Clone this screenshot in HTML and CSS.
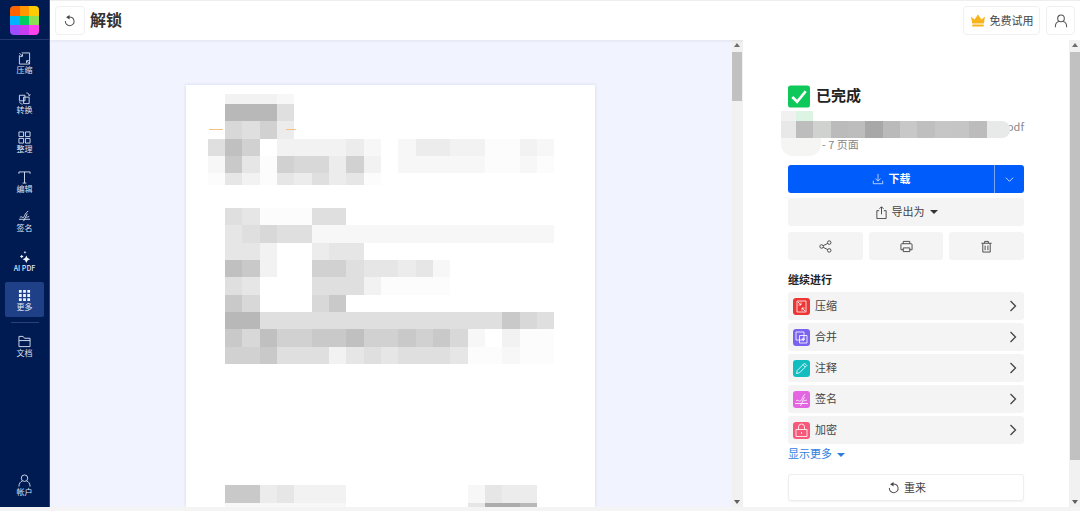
FILE: index.html
```html
<!DOCTYPE html>
<html lang="zh-CN">
<head>
<meta charset="utf-8">
<title>解锁</title>
<link rel="stylesheet" href="styles.css">
</head>
<body>
<div class="app">
  <aside class="side">
    <div class="logo-wrap">
      <div class="logo">
        <i class="l1"></i><i class="l2"></i><i class="l3"></i>
        <i class="l4"></i><i class="l5"></i><i class="l6"></i>
        <i class="l7"></i><i class="l8"></i><i class="l9"></i>
      </div>
    </div>
    <nav class="nav">
      <a class="nav-item">
        <svg class="nav-ic" viewBox="0 0 14 14"><path d="M4 1h8.500v12H1.500V3.500M1.500 1.200l3 3M4.800 2.200v2.500H2.300M12.500 12.800l-3-3M9.200 11.800V9.300h2.500"/></svg>
        <span>压缩</span>
      </a>
      <a class="nav-item">
        <svg class="nav-ic" viewBox="0 0 14 14"><path d="M1.500 3.500h6v6h-6zM6 5.500h6v7H6zM9 1c1.800 0 3 1 3.300 2.800M11 3l1.300 1 1-1.300M5 13c-1.800 0-3-.8-3.300-2.500"/></svg>
        <span>转换</span>
      </a>
      <a class="nav-item">
        <svg class="nav-ic" viewBox="0 0 14 14"><path d="M1 1h5v5H1zM8 1h5v5H8zM1 8h5v5H1zM8 8h5v5H8z"/></svg>
        <span>整理</span>
      </a>
      <a class="nav-item">
        <svg class="nav-ic" viewBox="0 0 14 14"><path d="M1 3V1h12v2M7 1v12M5 13h4"/></svg>
        <span>编辑</span>
      </a>
      <a class="nav-item">
        <svg class="nav-ic" viewBox="0 0 14 14"><path d="M1 10h12M2 8c2-2 3 1 4 0s1-3 3-5l2-2M6 12l4-8M9 8c1 0 2-1 3-1"/></svg>
        <span>签名</span>
      </a>
      <a class="nav-item">
        <svg class="nav-ic solid" viewBox="0 0 14 14"><path d="M9 6l1.300 2.700L13 10l-2.700 1.300L9 14l-1.300-2.700L5 10l2.700-1.300zM4 5l.7 1.300L6 7l-1.300.7L4 9l-.7-1.300L2 7l1.300-.7zM7.500 1l.5 1 1 .5-1 .5-.5 1-.5-1-1-.5 1-.5z"/></svg>
        <span class="latin">AI PDF</span>
      </a>
      <a class="nav-item active">
        <svg class="nav-ic solid" viewBox="0 0 14 14"><path d="M1 1h3v3H1zM5.500 1h3v3h-3zM10 1h3v3h-3zM1 5.500h3v3H1zM5.500 5.500h3v3h-3zM10 5.500h3v3h-3zM1 10h3v3H1zM5.500 10h3v3h-3zM10 10h3v3h-3z"/></svg>
        <span>更多</span>
      </a>
    </nav>
    <div class="side-rule"></div>
    <a class="nav-item">
      <svg class="nav-ic" viewBox="0 0 14 14"><path d="M1 12.500V1.500h4.500l1.500 2h6v9zM1 6h12"/></svg>
      <span>文档</span>
    </a>
    <a class="nav-item account">
      <svg class="nav-ic" viewBox="0 0 14 14"><circle cx="7" cy="4.500" r="3.500"/><path d="M1 13.500c0-3.500 2-5.500 3.500-5.800M13 13.500c0-3.500-2-5.500-3.500-5.800"/></svg>
      <span>帐户</span>
    </a>
  </aside>

  <div class="content">
    <header class="top">
      <button class="tbtn undo">
        <svg class="ic16" viewBox="0 0 16 16"><path class="line" d="M6 3.700a5 5 0 1 1-3.300 4.300"/><path class="fill" d="M7.500 1v5.200L3.500 3.600z"/></svg>
      </button>
      <h1 class="title">解锁</h1>
      <button class="tbtn trial">
        <svg class="crown" viewBox="0 0 16 13"><path d="M1 2.500l3.500 3L8 .5l3.500 5 3.500-3-1.200 7H2.200zM2.300 10.500h11.400V12.500H2.300z"/></svg>
        <span>免费试用</span>
      </button>
      <button class="tbtn user">
        <svg class="ic16" viewBox="0 0 16 16"><circle class="line" cx="8" cy="5" r="3.800"/><path class="line" d="M1.500 15c0-3.800 2.200-6 4-6.400M14.500 15c0-3.800-2.200-6-4-6.400"/></svg>
      </button>
    </header>

    <div class="work">
      <section class="doc-area">
        <div class="page">
          <div class="mosaic">
            <div class="mr short"><i></i><i class="j"></i><i class="j"></i><i class="j"></i><i class="k"></i></div>
            <div class="mr"><i></i><i class="b"></i><i class="b"></i><i class="b"></i><i class="g"></i></div>
            <div class="mr"><i></i><i class="f"></i><i class="g"></i><i class="e"></i><i class="i"></i></div>
            <div class="mr"><i class="g"></i><i class="c"></i><i class="e"></i><i></i><i class="j"></i><i class="j"></i><i class="j"></i><i class="j"></i><i class="i"></i><i class="k"></i><i></i><i class="k"></i><i class="i"></i><i class="i"></i><i class="j"></i><i class="j"></i><i class="l"></i><i class="l"></i><i class="j"></i><i class="k"></i></div>
            <div class="mr"><i class="k"></i><i class="d"></i><i class="h"></i><i class="l"></i><i class="e"></i><i class="f"></i><i class="f"></i><i class="i"></i><i class="e"></i><i class="j"></i><i></i><i class="k"></i><i class="k"></i><i class="k"></i><i class="k"></i><i class="k"></i><i class="l"></i><i class="l"></i><i class="k"></i><i class="l"></i></div>
            <div class="mr low"><i class="l"></i><i class="h"></i><i class="j"></i><i class="l"></i><i class="h"></i><i class="i"></i><i class="g"></i><i class="i"></i><i class="h"></i><i class="l"></i></div>
            <div class="gap-a"></div>
            <div class="mr"><i></i><i class="g"></i><i class="h"></i><i class="l"></i><i class="l"></i><i class="l"></i><i class="g"></i><i class="g"></i></div>
            <div class="mr"><i></i><i class="h"></i><i class="g"></i><i class="f"></i><i class="g"></i><i class="g"></i><i class="k"></i><i class="k"></i><i class="k"></i><i class="k"></i><i class="k"></i><i class="k"></i><i class="k"></i><i class="k"></i><i class="k"></i><i class="k"></i><i class="k"></i><i class="k"></i><i class="k"></i><i class="k"></i></div>
            <div class="mr"><i></i><i class="h"></i><i class="h"></i><i class="j"></i><i></i><i></i><i class="i"></i><i class="h"></i><i class="h"></i></div>
            <div class="mr"><i></i><i class="c"></i><i class="d"></i><i class="j"></i><i></i><i></i><i class="e"></i><i class="e"></i><i class="g"></i><i class="h"></i><i class="h"></i><i class="i"></i><i class="h"></i><i class="k"></i></div>
            <div class="mr"><i></i><i class="g"></i><i class="h"></i><i></i><i></i><i></i><i class="g"></i><i class="g"></i><i class="g"></i><i class="j"></i><i class="l"></i><i class="l"></i><i class="l"></i><i class="l"></i></div>
            <div class="mr"><i></i><i class="d"></i><i class="f"></i><i></i><i></i><i></i><i class="f"></i><i class="d"></i></div>
            <div class="mr"><i></i><i class="b"></i><i class="b"></i><i class="g"></i><i class="g"></i><i class="g"></i><i class="g"></i><i class="g"></i><i class="g"></i><i class="g"></i><i class="g"></i><i class="g"></i><i class="g"></i><i class="g"></i><i class="g"></i><i class="g"></i><i class="g"></i><i class="d"></i><i class="f"></i><i class="g"></i></div>
            <div class="mr"><i></i><i class="d"></i><i class="f"></i><i class="c"></i><i class="e"></i><i class="e"></i><i class="d"></i><i class="d"></i><i class="c"></i><i class="e"></i><i class="e"></i><i class="d"></i><i class="e"></i><i class="d"></i><i class="f"></i><i class="k"></i><i></i><i class="j"></i><i class="l"></i><i class="l"></i></div>
            <div class="mr"><i></i><i class="e"></i><i class="e"></i><i class="d"></i><i class="g"></i><i class="g"></i><i class="g"></i><i class="j"></i><i class="h"></i><i class="g"></i><i class="h"></i><i class="g"></i><i class="g"></i><i class="g"></i><i class="h"></i><i class="l"></i><i class="l"></i><i class="k"></i><i class="l"></i><i class="l"></i></div>
            <div class="gap-b"></div>
            <div class="mr"><i></i><i class="d"></i><i class="d"></i><i class="i"></i><i class="h"></i><i class="j"></i><i class="j"></i><i class="j"></i><i></i><i></i><i></i><i></i><i></i><i></i><i></i><i class="k"></i><i class="h"></i><i class="i"></i><i class="i"></i></div>
            <div class="mr"><i></i><i class="k"></i><i class="k"></i><i class="k"></i><i class="k"></i><i class="k"></i><i class="k"></i><i class="k"></i><i></i><i></i><i></i><i></i><i></i><i></i><i></i><i class="h"></i><i class="a"></i><i class="a"></i><i class="b"></i></div>
          </div>
          <span class="dash dash-l"></span>
          <span class="dash dash-r"></span>
        </div>
      </section>

      <div class="sbar sbar-doc">
        <span class="arrow up"></span>
        <span class="thumb thumb-doc"></span>
        <span class="arrow down"></span>
      </div>

      <section class="panel">
        <div class="panel-body">
          <div class="done">
            <svg class="check" viewBox="0 0 23 23"><rect width="23" height="23" rx="3"/><path d="M4.500 12l5 5 9-11"/></svg>
            <span>已完成</span>
          </div>
          <div class="file">
            <div class="file-name">.pdf</div>
            <div class="file-meta">- 7 页面</div>
            <div class="file-mask">
              <div class="fm-row fm-top"><i class="w1"></i><i class="w2"></i></div>
              <div class="fm-row"><i class="w1 v1"></i><i class="v2"></i><i class="v3"></i><i class="v4"></i><i class="v5"></i><i class="v6"></i><i class="v7"></i><i class="v8"></i><i class="v9"></i><i class="v10"></i><i class="v11"></i><i class="v12"></i><i class="w3"></i></div>
              <div class="fm-row fm-bot"><i class="w4"></i></div>
            </div>
          </div>

          <div class="download">
            <button class="dl-main">
              <svg class="ic14" viewBox="0 0 14 14"><path d="M7 1v8M4 6.500L7 9.500l3-3M1.500 9v3.500h11V9"/></svg>
              <span>下载</span>
            </button>
            <button class="dl-more">
              <svg class="ic12" viewBox="0 0 12 12"><path d="M2 4l4 4 4-4"/></svg>
            </button>
          </div>

          <button class="gbtn export">
            <svg class="ic14 dark" viewBox="0 0 14 14"><path d="M7 9V1M4.800 3L7 .8 9.200 3M4.500 5H2v8.500h10V5H9.500"/></svg>
            <span>导出为</span>
            <i class="caret"></i>
          </button>

          <div class="tools">
            <button class="gbtn tool">
              <svg class="ic14 dark" viewBox="0 0 14 14"><circle cx="2.800" cy="7" r="1.900"/><circle cx="11" cy="2.800" r="1.900"/><circle cx="11" cy="11.200" r="1.900"/><path d="M4.500 6.100l4.800-2.400M4.500 7.900l4.800 2.400"/></svg>
            </button>
            <button class="gbtn tool">
              <svg class="ic14 dark" viewBox="0 0 14 14"><path d="M3.500 4V1.500h7V4M3.500 10.500H1V5a1 1 0 0 1 1-1h10a1 1 0 0 1 1 1v5.500h-2.500M3.500 8.500h7v4h-7z"/></svg>
            </button>
            <button class="gbtn tool">
              <svg class="ic14 dark" viewBox="0 0 14 14"><path d="M1.500 3.500h11M5 3.500V1.500h4v2M3 3.500v9.500h8V3.500M5.500 6v5M8.500 6v5"/></svg>
            </button>
          </div>

          <h2 class="next">继续进行</h2>
          <ul class="actions">
            <li class="act">
              <span class="tile red"><svg viewBox="0 0 17 17"><path d="M4 3h9v11H4zM5 4l3 3M8 4.500V7H5.500M12 13L9 10M9 12.500V10h2.500"/></svg></span>
              <span class="act-name">压缩</span>
              <svg class="chev" viewBox="0 0 10 12"><path d="M2.500 1l5 5-5 5"/></svg>
            </li>
            <li class="act">
              <span class="tile violet"><svg viewBox="0 0 17 17"><path d="M3 3h8v8H3zM6.500 6.500H14V14H6.500zM10.200 8.500v3.500M8.500 10.200H12"/></svg></span>
              <span class="act-name">合并</span>
              <svg class="chev" viewBox="0 0 10 12"><path d="M2.500 1l5 5-5 5"/></svg>
            </li>
            <li class="act">
              <span class="tile teal"><svg viewBox="0 0 17 17"><path d="M3.500 13.500l.7-3L11.500 3.200l2.300 2.300-7.300 7.300zM10 4.700l2.300 2.300"/></svg></span>
              <span class="act-name">注释</span>
              <svg class="chev" viewBox="0 0 10 12"><path d="M2.500 1l5 5-5 5"/></svg>
            </li>
            <li class="act">
              <span class="tile pink"><svg viewBox="0 0 17 17"><path d="M2 12.500h13M3 10c2-2 3 1 4.500 0s1.500-3 3-5l1.500-2M7.500 15l4-9M10.500 10c1.200 0 2.500-1 3.500-1"/></svg></span>
              <span class="act-name">签名</span>
              <svg class="chev" viewBox="0 0 10 12"><path d="M2.500 1l5 5-5 5"/></svg>
            </li>
            <li class="act">
              <span class="tile rose"><svg viewBox="0 0 17 17"><path d="M3 7.500h11V14.500H3zM5.500 7.500V5a3 3 0 0 1 6 0v2.500M8.500 10v2"/></svg></span>
              <span class="act-name">加密</span>
              <svg class="chev" viewBox="0 0 10 12"><path d="M2.500 1l5 5-5 5"/></svg>
            </li>
          </ul>
          <a class="more">显示更多<i class="caret blue"></i></a>
          <button class="retry">
            <svg class="ic16" viewBox="0 0 16 16"><path class="line" d="M6 3.700a5 5 0 1 1-3.300 4.300"/><path class="fill" d="M7.500 1v5.200L3.500 3.600z"/></svg>
            <span>重来</span>
          </button>
        </div>
        <div class="sbar sbar-panel">
          <span class="arrow up"></span>
          <span class="thumb thumb-panel"></span>
          <span class="arrow down"></span>
        </div>
      </section>
    </div>
  </div>
</div>
<div class="foot"></div>
</body>
</html>
```
FILE: styles.css
```css
* { box-sizing: border-box; margin: 0; padding: 0; }
html, body { width: 1080px; height: 511px; overflow: hidden; background: #f4f4f5; }
body { font-family: "Noto Sans CJK SC", "Noto Sans", sans-serif; color: #333; }
button { font-family: inherit; border: 0; background: none; color: inherit; }
i { display: block; font-style: normal; }
ul { list-style: none; }

.app { display: flex; height: 507px; }
.foot { height: 4px; background: #f4f4f5; }

/* sidebar */
.side { width: 50px; flex: none; background: #001a52; display: flex; flex-direction: column; align-items: center; border-right: 1px solid #33497c; }
.logo-wrap { width: 100%; height: 40px; padding: 6px 0 0 10px; border-bottom: 1px solid #23396d; margin-bottom: 5px; }
.logo { width: 29px; height: 29px; border-radius: 4px; overflow: hidden; display: grid; grid-template-columns: repeat(3, 1fr); grid-template-rows: repeat(3, 1fr); }
.l1 { background: #ff6400; } .l2 { background: #ff9800; } .l3 { background: #ffcb05; }
.l4 { background: #00b2ff; } .l5 { background: #00cf63; } .l6 { background: #8fdf55; }
.l7 { background: #9b4dff; } .l8 { background: #c93df2; } .l9 { background: #ff42ea; }
.nav { display: flex; flex-direction: column; gap: 4.5px; }
.nav-item { width: 39px; height: 35px; padding-top: 7px; border-radius: 2px; display: flex; flex-direction: column; align-items: center; color: #dfe5f2; font-size: 8px; line-height: 10px; white-space: nowrap; }
.nav-item .latin { font-size: 7px; font-weight: 500; }
.nav-item.active { background: #1f3f87; }
.nav-ic { width: 13px; height: 13px; flex: none; fill: none; stroke: #d9e0ef; stroke-width: 1; }
.nav-ic.solid { fill: #f2f5fb; stroke: none; }
.side-rule { width: 28px; height: 1px; background: #2b4277; margin: 5px 0; }
.account { margin-top: auto; margin-bottom: 5px; }

/* header */
.content { flex: 1; min-width: 0; display: flex; flex-direction: column; }
.top { height: 40px; flex: none; background: #fff; border-top: 1px solid #eee; display: flex; align-items: center; padding: 0 5px; box-shadow: 0 1px 3px rgba(0, 0, 0, .07); position: relative; }
.tbtn { height: 29px; background: #fff; border: 1px solid #f0f0f0; border-radius: 4px; display: flex; align-items: center; justify-content: center; }
.undo { width: 30px; }
.title { font-size: 16px; line-height: 20px; font-weight: 700; color: #333; margin: 0 auto 3px 5px; }
.trial { width: 77px; gap: 4px; font-size: 11px; color: #444; }
.trial span { margin-bottom: 1px; }
.user { width: 29px; margin-left: 6px; }
.crown { width: 16px; height: 13px; fill: #f8b41c; }
.ic16 { width: 14px; height: 14px; }
.line { fill: none; stroke: #555; stroke-width: 1.200; }
.fill { fill: #444; }

/* workspace */
.work { flex: 1; min-height: 0; display: flex; }
.doc-area { flex: 1; min-width: 0; background: #f1f3fe; display: flex; justify-content: center; padding: 45px 1px 0 0; overflow: hidden; }
.page { width: 409px; background: #fff; position: relative; overflow: hidden; box-shadow: 0 0 3px rgba(120, 130, 180, .25); padding: 9px 0 0 21.670px; }
.mosaic { filter: blur(.4px); }
.mr { display: grid; grid-template-columns: repeat(21, 17.330px); height: 17.330px; }
.mr.short { height: 10px; }
.mr.low { height: 12px; }
.gap-a { height: 22.700px; }
.gap-b { height: 121.300px; }
.mr .a { background: #acacac; } .mr .b { background: #b8b8b8; } .mr .c { background: #c0c0c0; }
.mr .d { background: #c9c9c9; } .mr .e { background: #d1d1d1; } .mr .f { background: #d8d8d8; }
.mr .g { background: #dfdfdf; } .mr .h { background: #e6e6e6; } .mr .i { background: #ececec; }
.mr .j { background: #f2f2f2; } .mr .k { background: #f7f7f7; } .mr .l { background: #fcfcfc; }
.dash { position: absolute; top: 44px; height: 1px; background: #f3c283; }
.dash-l { left: 23px; width: 14px; }
.dash-r { left: 100px; width: 10px; }

.sbar { width: 11px; flex: none; background: #f1f1f1; display: flex; flex-direction: column; align-items: center; padding: 3px 0; }
.sbar-doc { padding-right: 1px; }
.sbar-panel { padding-left: 1px; }
.arrow { width: 0; height: 0; flex: none; border-left: 3px solid transparent; border-right: 3px solid transparent; }
.arrow.up { border-bottom: 4px solid #6d6d6d; }
.arrow.down { border-top: 4px solid #5f5f5f; margin-top: auto; }
.thumb { width: 10px; flex: none; background: #c1c1c1; margin-top: 5px; }
.thumb-doc { height: 49px; }
.thumb-panel { height: 408px; }

/* right panel */
.panel { width: 337px; flex: none; background: #fff; display: flex; position: relative; }
.panel-body { flex: 1; padding: 45px 45px 0; min-width: 0; }
.done { height: 23px; display: flex; align-items: center; gap: 6px; font-size: 15px; font-weight: 700; color: #222; }
.done span { margin-bottom: 4px; }
.check { width: 22px; height: 23px; flex: none; }
.check rect { fill: #0fc85a; }
.check path { fill: none; stroke: #fff; stroke-width: 2.800; }
.file { margin-top: 10px; position: relative; font-size: 11px; line-height: 16px; color: #888; }
.file-name { text-align: right; }
.file-meta { margin-top: 2px; padding-left: 34px; }
.file-mask { position: absolute; left: -7px; top: -7px; width: 229px; filter: blur(.4px); }
.fm-row { display: flex; height: 17.330px; }
.fm-top { height: 10px; }
.fm-row i { width: 17.330px; flex: none; }
.fm-row .w1 { width: 15px; background: #f1f1f1; }
.fm-row .w2 { background: #dcf4e3; }
.fm-row .v1 { background: #e8e8e8; }
.fm-row .v2 { background: #bdbdbd; } .fm-row .v3 { background: #d0d2d0; } .fm-row .v4 { background: #bbb; }
.fm-row .v5 { background: #bdbdbd; } .fm-row .v6 { background: #a8a8a8; } .fm-row .v7 { background: #bababa; }
.fm-row .v8 { background: #c8c8c8; } .fm-row .v9 { background: #bfbfbf; } .fm-row .v10 { background: #c6c6c6; }
.fm-row .v11 { background: #c5c5c5; } .fm-row .v12 { background: #bcbcbc; }
.fm-row .w3 { width: 23px; background: #e8e9e9; border-radius: 0 8px 8px 0; }
.fm-row .w4 { width: 40px; background: #f5f5f4; border-radius: 0 0 12px 12px; }

.download { margin-top: 13px; height: 28px; display: flex; background: #005cfb; border-radius: 3px; color: #fff; }
.dl-main { flex: 1; display: flex; align-items: center; justify-content: center; gap: 5px; color: #fff; font-size: 11px; font-weight: 700; }
.dl-main span { margin-bottom: 2px; }
.dl-more { width: 30px; border-left: 1px solid #7aa7f5; display: flex; align-items: center; justify-content: center; }
.ic14 { width: 12px; height: 12px; fill: none; stroke: #cfe0ff; stroke-width: 1; }
.ic14.dark { stroke: #444; width: 13px; height: 13px; }
.ic12 { width: 11px; height: 11px; fill: none; stroke: #d6e4ff; stroke-width: 1; }

.gbtn { background: #f4f4f4; border-radius: 3px; display: flex; align-items: center; justify-content: center; height: 28px; color: #444; font-size: 11px; }
.export { width: 100%; margin-top: 5px; gap: 4px; }
.export span { margin-bottom: 2px; }
.caret { width: 0; height: 0; border-left: 4px solid transparent; border-right: 4px solid transparent; border-top: 4px solid #333; margin-left: 1px; }
.caret.blue { border-top-color: #2f7de0; display: inline-block; margin-left: 5px; vertical-align: 1px; }
.tools { margin-top: 6px; display: flex; gap: 6px; }
.tool { flex: 1; }

.next { margin-top: 11px; font-size: 11px; line-height: 16px; font-weight: 700; color: #222; }
.actions { margin-top: 5px; display: flex; flex-direction: column; gap: 3px; }
.act { height: 28px; background: #f4f4f4; border-radius: 3px; padding: 0 6px 0 5px; display: flex; align-items: center; gap: 5px; font-size: 11px; color: #444; }
.act-name { margin: 0 auto 2px 0; }
.tile { width: 17px; height: 17px; border-radius: 3px; display: block; flex: none; }
.tile svg { display: block; width: 17px; height: 17px; fill: none; stroke: rgba(255, 255, 255, .9); stroke-width: .9; }
.red { background: #ee3535; } .violet { background: #7b63f1; } .teal { background: #12bdc0; }
.pink { background: #e465e2; } .rose { background: #f9587a; }
.chev { width: 10px; height: 12px; fill: none; stroke: #444; stroke-width: 1.300; }
.more { display: block; margin-top: 1px; margin-bottom: 1px; font-size: 11px; line-height: 16px; color: #2f7de0; }
.retry { margin-top: 13px; width: 100%; height: 27px; border: 1px solid #eee; border-radius: 3px; box-shadow: 0 1px 2px rgba(0, 0, 0, .05); display: flex; align-items: center; justify-content: center; gap: 3px; padding-left: 1px; font-size: 11px; color: #444; background: #fff; }
.retry span { margin-bottom: 1px; }
```
